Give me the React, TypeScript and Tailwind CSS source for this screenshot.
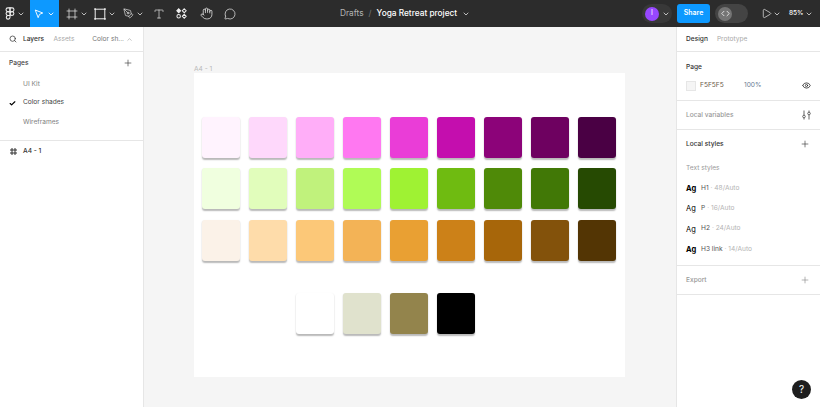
import React from "react";
import {
  ChevronDown,
  ChevronUp,
  Check,
  Code,
  Eye,
  Frame,
  Hand,
  MessageCircle,
  PenTool,
  Play,
  Plus,
  Search,
  Type,
} from "lucide-react";

const swatchRows = [
  ["#fff3fe", "#fed8fb", "#ffaef8", "#ff78f1", "#ea3dd7", "#c40eae", "#8c0379", "#6e0160", "#4a0044"],
  ["#f0ffdf", "#e1fdbb", "#c0f27c", "#b0fb56", "#9ff233", "#6fbb11", "#4f8a08", "#417806", "#264a02"],
  ["#fbf2e8", "#fedcaa", "#fcc878", "#f3b356", "#e9a033", "#cc8118", "#a7660a", "#83520b", "#533504"],
];

const lastRow = ["#ffffff", "#e0e2cd", "#93844c", "#000000"];

const textStyles = [
  { name: "H1", size: "48/Auto", bold: true },
  { name: "P", size: "16/Auto", bold: false },
  { name: "H2", size: "24/Auto", bold: false },
  { name: "H3 link", size: "14/Auto", bold: true },
];

function Caret({ className = "text-[#d9d9d9]" }: { className?: string }) {
  return <ChevronDown className={`w-[8px] h-[8px] ${className}`} strokeWidth={2.5} />;
}

function FigmaMark() {
  return (
    <svg width="10" height="13" viewBox="0 0 10 15" fill="none" stroke="#f0f0f0" strokeWidth="1.2">
      <path d="M5 1H2.6a2.1 2.1 0 0 0 0 4.4H5z" />
      <path d="M5 1h2.4a2.2 2.2 0 0 1 0 4.4H5z" />
      <path d="M5 5.4H2.6a2.1 2.1 0 0 0 0 4.3H5z" />
      <circle cx="7.3" cy="7.6" r="2.2" />
      <path d="M5 9.7H2.6A2.15 2.15 0 1 0 5 11.8z" />
    </svg>
  );
}

function MoveTool() {
  return (
    <svg width="10" height="10" viewBox="0 0 12 12" fill="none" stroke="#ffffff" strokeWidth="1.1">
      <path d="M1.5 1.2l9 3.6-3.9 1.6-1.6 4z" strokeLinejoin="round" />
    </svg>
  );
}

function RectTool() {
  return (
    <svg width="12" height="12" viewBox="0 0 12 12" fill="none" stroke="#eeeeee" strokeWidth="1">
      <rect x="1.2" y="1.2" width="9.6" height="9.6" />
      <rect x="0.3" y="0.3" width="1.6" height="1.6" fill="#eeeeee" stroke="none" />
      <rect x="10.1" y="0.3" width="1.6" height="1.6" fill="#eeeeee" stroke="none" />
      <rect x="0.3" y="10.1" width="1.6" height="1.6" fill="#eeeeee" stroke="none" />
      <rect x="10.1" y="10.1" width="1.6" height="1.6" fill="#eeeeee" stroke="none" />
    </svg>
  );
}

function ComponentsIcon() {
  return (
    <svg width="11" height="11" viewBox="0 0 12 12" fill="none" stroke="#eeeeee" strokeWidth="1.1">
      <path d="M3 .9L5 3 3 5.1.9 3z" fill="#eeeeee" />
      <path d="M9 .9L11.1 3 9 5.1 6.9 3z" />
      <rect x="1" y="7.2" width="3.8" height="3.8" rx="1.9" />
      <path d="M9 6.9L11.1 9 9 11.1 6.9 9z" />
    </svg>
  );
}

function LayerFrameIcon() {
  return (
    <svg width="7" height="7" viewBox="0 0 7 7" fill="none" stroke="#333333" strokeWidth="1">
      <path d="M2 0v7M5 0v7M0 2h7M0 5h7" />
    </svg>
  );
}

function TopBar() {
  return (
    <header className="h-[27px] shrink-0 bg-[#2c2c2c] flex items-center text-white">
      <div className="flex items-center">
        <div className="w-[30px] flex items-center justify-center gap-[2px]">
          <FigmaMark />
          <Caret />
        </div>
        <div className="w-[29px] h-[27px] bg-[#0d99ff] flex items-center justify-center gap-[3px]">
          <MoveTool />
          <Caret className="text-white" />
        </div>
        <div className="w-[29px] ml-[3px] flex items-center justify-center gap-[2px]">
          <Frame className="w-[12px] h-[12px] text-[#eeeeee]" strokeWidth={1.4} />
          <Caret />
        </div>
        <div className="w-[28px] flex items-center justify-center gap-[2px]">
          <RectTool />
          <Caret />
        </div>
        <div className="w-[29px] flex items-center justify-center gap-[2px]">
          <PenTool className="w-[11px] h-[11px] text-[#eeeeee]" strokeWidth={1.4} />
          <Caret />
        </div>
        <div className="w-[21px] flex items-center justify-center">
          <Type className="w-[12px] h-[12px] text-[#eeeeee]" strokeWidth={1.3} />
        </div>
        <div className="w-[25px] flex items-center justify-center">
          <ComponentsIcon />
        </div>
        <div className="w-[24px] flex items-center justify-center">
          <Hand className="w-[13px] h-[13px] text-[#eeeeee]" strokeWidth={1.4} />
        </div>
        <div className="w-[23px] flex items-center justify-center">
          <MessageCircle className="w-[12px] h-[12px] text-[#eeeeee]" strokeWidth={1.4} />
        </div>
      </div>
      <div className="ml-[99px] flex items-center text-[8.3px] w-[302px]">
        <span className="text-[#b3b3b3]">Drafts</span>
        <span className="text-[#777777] mx-[5px]">/</span>
        <span className="font-medium text-white">Yoga Retreat project</span>
        <Caret className="text-[#d9d9d9] ml-[5px]" />
      </div>
      <div className="flex items-center">
        <div className="w-[30px] h-[19px] rounded-full bg-[#383838] flex items-center pl-[3px] gap-[3px]">
          <div className="w-[14px] h-[14px] rounded-full bg-[#9747ff] flex items-center justify-center text-[7px]">I</div>
          <Caret />
        </div>
        <div className="ml-[5px] w-[33px] h-[19px] rounded-[3px] bg-[#0d99ff] flex items-center justify-center text-[7px] font-semibold">
          Share
        </div>
        <div className="ml-[5px] w-[33px] h-[19px] rounded-full bg-[#444444] flex items-center pl-[3px]">
          <div className="w-[14px] h-[14px] rounded-full bg-[#757575] flex items-center justify-center">
            <Code className="w-[9px] h-[9px] text-white" strokeWidth={2} />
          </div>
        </div>
        <Play className="ml-[13px] w-[11px] h-[11px] text-[#eeeeee]" strokeWidth={1.5} />
        <Caret className="text-[#d9d9d9] ml-[1px]" />
        <span className="ml-[8px] w-[14px] text-[6.5px] font-medium whitespace-nowrap">85%</span>
        <Caret className="text-[#d9d9d9] ml-[2px]" />
      </div>
    </header>
  );
}

function LeftPanel() {
  return (
    <aside className="w-[144px] shrink-0 bg-white border-r border-[#e6e6e6] text-[6.6px]">
      <div className="h-[24.5px] border-b border-[#e6e6e6] flex items-center pl-[9px] pr-[10px] pt-[3px]">
        <Search className="w-[8px] h-[8px] text-[#333333] mb-[2px]" strokeWidth={2.2} />
        <span className="ml-[6px] font-medium text-[#333333]">Layers</span>
        <span className="ml-[9.5px] text-[#a8a8a8]">Assets</span>
        <span className="ml-auto text-[#777777]">Color sh...</span>
        <ChevronUp className="ml-[2px] w-[7px] h-[7px] text-[#999999] mb-[2px]" strokeWidth={2} />
      </div>
      <div className="h-[89px] border-b border-[#e6e6e6]">
        <div className="h-[22px] flex items-center justify-between pl-[9px] pr-[10px] pt-[3px]">
          <span className="font-medium text-[#444444]">Pages</span>
          <Plus className="w-[10px] h-[10px] text-[#333333] mb-[2px]" strokeWidth={1.5} />
        </div>
        <div className="h-[19px] pl-[23px] pt-[3px] flex items-center text-[#808080]">UI Kit</div>
        <div className="h-[19px] pl-[9px] pt-[2px] flex items-center text-[#444444]">
          <Check className="w-[7px] h-[7px] text-black mr-[7px]" strokeWidth={4} />
          Color shades
        </div>
        <div className="h-[19px] pl-[23px] pt-[3px] flex items-center text-[#808080]">Wireframes</div>
      </div>
      <div className="h-[20px] flex items-center pl-[10px] pt-[2px] font-medium text-[#333333]">
        <span className="w-[13px] flex items-center">
          <LayerFrameIcon />
        </span>
        A4 - 1
      </div>
    </aside>
  );
}

function Swatch({ color }: { color: string }) {
  return (
    <div
      className="w-[38.5px] h-[41px] rounded-[3px] shadow-[0_1.5px_1.5px_rgba(0,0,0,0.28)]"
      style={{ backgroundColor: color }}
    />
  );
}

function Canvas() {
  return (
    <main className="flex-1 bg-[#f5f5f5] pl-[50px] pt-[38px] relative">
      <div className="h-[8px] flex items-center text-[6.6px] leading-none text-[#b8b8b8]">A4 - 1</div>
      <div className="w-[431px] h-[304px] bg-white pt-[43.5px] pl-[7.8px]">
        <div className="flex flex-col gap-[10.5px]">
          {swatchRows.map((row, i) => (
            <div key={i} className="flex gap-[8.5px]">
              {row.map((c) => (
                <Swatch key={c} color={c} />
              ))}
            </div>
          ))}
        </div>
        <div className="flex gap-[8.5px] mt-[32px] ml-[94px]">
          {lastRow.map((c) => (
            <Swatch key={c} color={c} />
          ))}
        </div>
      </div>
    </main>
  );
}

function RightPanel() {
  return (
    <aside className="w-[144px] shrink-0 bg-white border-l border-[#e6e6e6] text-[6.6px] relative">
      <div className="h-[24.5px] border-b border-[#e6e6e6] flex items-center pl-[9px] pt-[3px] gap-[9px]">
        <span className="font-medium text-[#333333]">Design</span>
        <span className="text-[#a8a8a8]">Prototype</span>
      </div>
      <div className="h-[49px] border-b border-[#e6e6e6] pl-[9px] pr-[9px] pt-[9px]">
        <div className="font-medium text-[#333333] leading-[12px]">Page</div>
        <div className="mt-[8px] flex items-center">
          <div className="w-[10px] h-[10px] bg-[#f5f5f5] border border-[#e6e6e6]" />
          <span className="ml-[4px] w-[44px] text-[#6b5a4a]">F5F5F5</span>
          <span className="text-[#6a7a90]">100%</span>
          <Eye className="ml-auto w-[9px] h-[9px] text-[#222222]" strokeWidth={2} />
        </div>
      </div>
      <div className="h-[29px] border-b border-[#e6e6e6] flex items-center justify-between pl-[9px] pr-[9px] pt-[2px]">
        <span className="font-medium text-[#999999]">Local variables</span>
        <svg width="9" height="10" viewBox="0 0 9 10" fill="none" stroke="#555555" strokeWidth="0.9" className="mb-[2px]">
          <path d="M2 0.5V5M2 8v1.5M7 0.5V2M7 5v4.5" />
          <circle cx="2" cy="6.5" r="1.3" />
          <circle cx="7" cy="3.5" r="1.3" />
        </svg>
      </div>
      <div className="h-[136px] border-b border-[#e6e6e6] pl-[9px] pr-[10px]">
        <div className="h-[28.5px] flex items-center justify-between pt-[3px]">
          <span className="font-medium text-[#333333]">Local styles</span>
          <Plus className="w-[10px] h-[10px] text-[#333333] mb-[2px]" strokeWidth={1.5} />
        </div>
        <div className="h-[19px] flex items-center text-[#999999] pt-[3px]">Text styles</div>
        {textStyles.map((s) => (
          <div key={s.name} className="h-[20.3px] flex items-center pt-[3px]">
            <span className={`w-[15px] text-[7.5px] text-black ${s.bold ? "font-bold" : "font-normal"}`}>Ag</span>
            <span className="text-[#555555]">{s.name}</span>
            <span className="text-[#b3b3b3] ml-[2px]">· {s.size}</span>
          </div>
        ))}
      </div>
      <div className="h-[29px] border-b border-[#e6e6e6] flex items-center justify-between pl-[9px] pr-[10px] pt-[2px]">
        <span className="font-medium text-[#999999]">Export</span>
        <Plus className="w-[10px] h-[10px] text-[#888888] mb-[2px]" strokeWidth={1.5} />
      </div>
      <div className="absolute right-[9px] bottom-[8px] w-[19px] h-[19px] rounded-full bg-[#1e1e1e] flex items-center justify-center text-white text-[10px]">
        ?
      </div>
    </aside>
  );
}

export default function App() {
  return (
    <div className="w-[820px] h-[407px] flex flex-col overflow-hidden font-['Inter',sans-serif]">
      <TopBar />
      <div className="flex-1 flex min-h-0">
        <LeftPanel />
        <Canvas />
        <RightPanel />
      </div>
    </div>
  );
}
